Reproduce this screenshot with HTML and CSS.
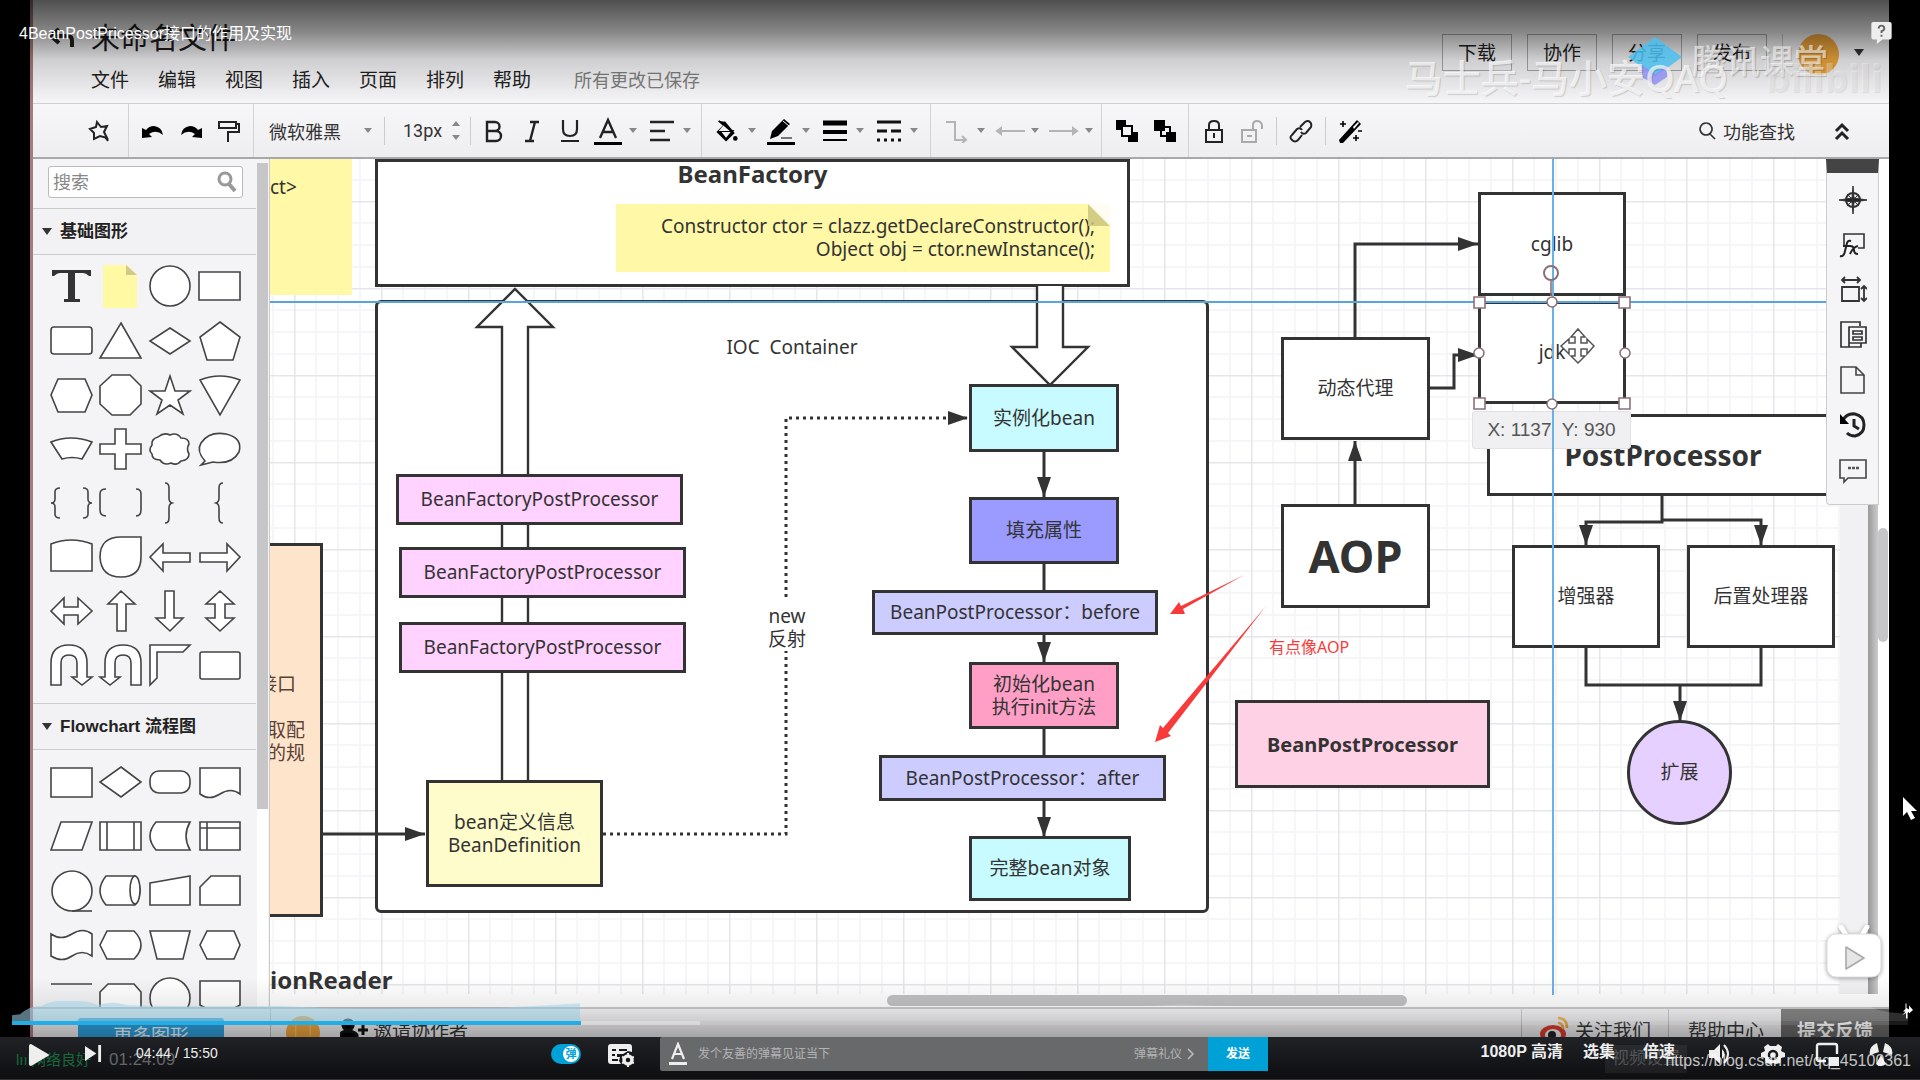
FILE: index.html
```html
<!DOCTYPE html>
<html lang="zh-CN">
<head>
<meta charset="utf-8">
<title>4BeanPostPricessor接口的作用及实现</title>
<link rel="stylesheet" href="styles.css">
</head>
<body>
<main class="player">
  <section class="video">
    <header class="top">
      <button class="back" aria-label="返回"><svg width="26" height="24" viewBox="0 0 26 24"><path d="M10 3 2 10l8 7M3 10h16q4 0 4 5v6" fill="none" stroke="#222" stroke-width="4"/></svg></button>
      <div class="heading">
        <h1>未命名文件</h1>
        <nav class="menu">
          <button>文件</button><button>编辑</button><button>视图</button><button>插入</button><button>页面</button><button>排列</button><button>帮助</button>
          <span class="saved">所有更改已保存</span>
        </nav>
      </div>
      <div class="actions">
        <button>下载</button><button>协作</button><button>分享</button><button>发布</button>
        <span class="rule"></span>
        <span class="avatar"></span>
        <i class="caret dark"></i>
      </div>
    </header>

    <div class="toolbar">
      <div class="group first"><button aria-label="形状"><svg viewBox="0 0 24 24"><path d="M9 3 13 8l6-1-3 6 3 6-7-2-6 3v-6l-4-4 6-2zM17 18l3 4" fill="none" stroke="#222" stroke-width="2"/></svg></button></div>
      <div class="group undo">
        <button aria-label="撤销"><svg viewBox="0 0 24 24"><path d="M1 9v10l10-1-3-3q7-5 14 1-1-8-9-9-5 0-8 4z"/></svg></button>
        <button aria-label="重做"><svg viewBox="0 0 24 24"><path d="M23 9v10l-10-1 3-3Q9 10 2 16q1-8 9-9 5 0 8 4z"/></svg></button>
        <button aria-label="格式刷"><svg viewBox="0 0 24 24"><path d="M2 3h17v6H2zM19 5h3v8H11v10" fill="none" stroke="#222" stroke-width="2"/></svg></button>
      </div>
      <div class="group text">
        <button class="font">微软雅黑<i class="caret"></i></button><span class="rule"></span>
        <button class="size">13px<span class="spin"><i></i><i></i></span></button><span class="rule edge"></span>
        <button aria-label="粗体"><svg viewBox="0 0 24 24"><path d="M5 3h8a4 4 0 0 1 0 9H5zm0 9h9a5 5 0 0 1 0 10H5z" fill="none" stroke="#222" stroke-width="2.4"/></svg></button>
        <button aria-label="斜体"><svg viewBox="0 0 24 24"><path d="M10 3h9M5 22h9M15 3l-5 19" fill="none" stroke="#222" stroke-width="2.4"/></svg></button>
        <button aria-label="下划线"><svg viewBox="0 0 24 24"><path d="M5 1v9q0 7 7 7t7-7V1M3 22h18" fill="none" stroke="#222" stroke-width="2.2"/></svg></button>
        <button class="wide" aria-label="文字颜色"><svg viewBox="0 0 30 28"><path d="m7 21 8-18 8 18M10 15h10" fill="none" stroke="#222" stroke-width="2.4"/><path d="M1 25h28v3H1z"/></svg></button><i class="caret"></i>
        <button class="after" aria-label="对齐"><svg viewBox="0 0 24 24"><path d="M0 3h24M0 12h15M0 21h20" stroke="#222" stroke-width="2.6"/></svg></button><i class="caret"></i>
      </div>
      <div class="group">
        <button aria-label="填充"><svg viewBox="0 0 24 26"><path d="M3 2l6 5-7 7 9 9 8-8L9 3M4 13h14l-7 9z" stroke="#000" stroke-width="2"/><path d="m8 7 7 6H3z" fill="#f4f3f5"/><circle cx="21" cy="21" r="2.5"/></svg></button><i class="caret"></i>
        <button class="wide after" aria-label="线条颜色"><svg viewBox="0 0 30 28"><path d="m4 22 2-8L18 2l6 5-12 12zM1 25h28v3H1z"/><path d="m17 4 6 5" stroke="#fff"/><path d="M15 21h11" stroke="#777" stroke-width="2"/></svg></button><i class="caret"></i>
        <button class="after" aria-label="线条宽度"><svg viewBox="0 0 24 24"><path d="M0 4h24" stroke="#000" stroke-width="5"/><path d="M0 13h24" stroke="#000" stroke-width="4"/><path d="M0 21h24" stroke="#000" stroke-width="2"/></svg></button><i class="caret"></i>
        <button class="after" aria-label="线条样式"><svg viewBox="0 0 24 24"><path d="M0 3h24" stroke="#111" stroke-width="3"/><path d="M0 12h24" stroke="#111" stroke-width="3" stroke-dasharray="10 4"/><path d="M0 21h24" stroke="#111" stroke-width="3" stroke-dasharray="3 4"/></svg></button><i class="caret"></i>
      </div>
      <div class="group faded">
        <button aria-label="连线类型"><svg viewBox="0 0 24 24"><path d="M2 3h9v18h11M18 17l4 4-4 3" fill="none" stroke="#b4b4b6" stroke-width="2"/></svg></button><i class="caret"></i>
        <button class="wide after" aria-label="起点"><svg viewBox="0 0 30 24"><path d="M2 12h28M6 9l-4 3 4 3z" fill="#b4b4b6" stroke="#b4b4b6" stroke-width="2"/></svg></button><i class="caret"></i>
        <button class="wide after" aria-label="终点"><svg viewBox="0 0 30 24"><path d="M0 12h28M24 9l4 3-4 3z" fill="#b4b4b6" stroke="#b4b4b6" stroke-width="2"/></svg></button><i class="caret"></i>
      </div>
      <div class="group layers">
        <button aria-label="置于顶层"><svg viewBox="0 0 24 24"><path d="M1 1h10v10H1zM13 13h10v10H13z"/><path d="M7 7h10v10H7z" fill="#f4f3f5" stroke="#000" stroke-width="2"/></svg></button>
        <button aria-label="置于底层"><svg viewBox="0 0 24 24"><path d="M8 8h9v9H8z" fill="none" stroke="#000" stroke-width="2"/><path d="M1 1h11v11H1zM13 13h10v10H13z"/></svg></button>
      </div>
      <div class="group last">
        <button aria-label="锁定"><svg viewBox="0 0 24 24"><path d="M4 11h16v12H4zM7 11V6q0-4 5-4t5 4v5M12 14v5" fill="none" stroke="#222" stroke-width="2"/></svg></button>
        <button aria-label="解锁"><svg viewBox="0 0 24 24"><path d="M2 11h14v12H2zM13 11V6q0-4 4-4t5 4v4M7 17h5" fill="none" stroke="#aaa" stroke-width="2"/></svg></button>
        <span class="rule gap"></span>
        <button aria-label="链接"><svg viewBox="0 0 24 24"><path d="m11 8 5-5q3-2 5 0t1 5l-5 6q-3 2-5-1M13 16l-4 5q-3 3-6 0t0-5l5-6q3-2 5 1" fill="none" stroke="#222" stroke-width="2"/></svg></button>
        <span class="rule gap"></span>
        <button aria-label="美化"><svg viewBox="0 0 24 24"><path d="M2 24 1 21 19 1l4 4L5 24z"/><path d="m15 8 5-5 1 1-5 6z" fill="#fff"/><path d="M5 2v6M2 5h6M18 16v6M15 19h6M20 12h4" stroke="#000" stroke-width="1.6"/></svg></button>
      </div>
      <button class="find"><svg width="20" height="20" viewBox="0 0 20 20"><path d="M8 2a6 6 0 1 0 .1 0M12 13l5 5" fill="none" stroke="#333" stroke-width="1.6"/></svg>功能查找</button>
      <button class="fold" aria-label="收起"><svg viewBox="0 0 24 24"><path d="m6 12 6-6 6 6M6 20l6-6 6 6" fill="none" stroke="#222" stroke-width="3"/></svg></button>
    </div>

    <div class="work">
      <aside class="shapes">
        <label class="search"><input type="text" placeholder="搜索" aria-label="搜索"><svg width="22" height="24" viewBox="0 0 22 24"><circle cx="9" cy="9" r="6" fill="none" stroke="#999" stroke-width="3"/><path d="m13 14 6 7" stroke="#999" stroke-width="4"/></svg></label>
        <h2><i class="caret dark"></i>基础图形</h2>
        <svg class="palette basic" viewBox="0 0 196 440">
          <g class="ink">
            <path d="M2 17h39v6h-2q-3-3-6-3h-8v26h5v3H14v-3h4V20h-8q-3 0-6 3H2z" fill="#333" stroke="none"/>
            <path d="M53 12h24l10 10v33H53z" fill="#fff9a3" stroke="none"/><path d="M76 12v10h11z" fill="#cfc98a" stroke="none"/>
            <circle cx="120" cy="33" r="20"/><path d="M149 19h41v28h-41z"/>
            <rect x="1" y="74" width="41" height="27" rx="3"/><path d="m71 70 20 35H50zM120 75l20 13-20 13-20-13zM170 69l20 15-7 23h-26l-7-23z"/>
            <path d="M8 126h27l7 16-7 17H8l-7-17zM62 122h18l11 11v18l-11 11H62l-12-11v-18zM120 123l5 15h15l-12 9 5 14-13-9-13 9 5-14-12-9h15zM150 127q20-8 40 0l-20 35z"/>
            <path d="M1 189q20-8 41 0l-10 17q-10-3-20 0zM65 176h11v15h15v10H76v15H65v-15H50v-10h15z"/>
            <path d="M108 184q6-5 12-2 7-3 11 3 8 0 8 6-3 5 0 10 0 6-8 7-4 5-10 2-7 3-11-3-8 0-8-6-4-4 0-9-1-6 6-8z"/>
            <path d="M155 208q-9-10-4-18 8-12 25-9 17 4 13 18-7 13-26 10l-12 3z"/>
            <path class="open" d="M10 235q-5 0-5 4v7q0 4-4 4 4 0 4 4v7q0 4 5 4M33 235q5 0 5 4v7q0 4 4 4-4 0-4 4v7q0 4-5 4M56 236q-6 0-6 5v16q0 6 6 6M86 236q5 0 5 5v16q0 6-5 6M115 230q4 0 4 5v10q0 4 3 5-3 1-3 5v10q0 5-4 5M173 230q-4 0-4 5v10q0 4-3 5 3 1 3 5v10q0 5 4 5"/>
            <path d="M1 291q20-8 41 0v27H1zM71 284h20v20q0 20-20 20t-21-20q0-20 21-20z"/>
            <path d="m100 304 13-13v9h27v9h-27v9zM190 304l-13-13v9h-27v9h27v9z"/>
            <path d="m1 358 13-13v9h14v-9l14 13-14 13v-9H14v9zM71 338l14 13h-9v27h-9v-27h-9zM120 378l-14-13h9v-27h9v27h9zM170 338l14 13h-9v14h9l-14 13-14-13h9v-14h-9z"/>
            <path d="M1 432v-22q0-18 18-18t18 18v14h5l-10 8-10-8h5v-14q0-8-8-8t-8 8v22zM91 432v-22q0-18-18-18t-18 18v14h-5l10 8 10-8h-5v-14q0-8 8-8t8 8v22z"/>
            <path d="M100 392h40l-7 7h-26v26l-7 7z"/><rect x="150" y="399" width="40" height="27" rx="2"/>
          </g>
        </svg>
        <h2><i class="caret dark"></i>Flowchart 流程图</h2>
        <svg class="palette flow" viewBox="0 0 196 257">
          <g class="ink">
            <path d="M1 18h41v29H1zM71 17l20 15-20 15-21-15z"/><rect x="100" y="21" width="40" height="22" rx="9"/><path d="M150 18h40v26q-9-7-20 0t-20 0z"/>
            <path d="M11 72h31l-10 28H1zM50 72h41v28H50z"/><path class="open" d="M57 72v28M84 72v28"/><path d="M106 72h34q-8 14 0 28h-34q-12-14 0-28zM150 72h40v28h-40z"/><path class="open" d="M157 72v28M150 78h40"/>
            <circle cx="22" cy="141" r="20"/><path class="open" d="M22 161h20"/><path d="M56 126h29q10 14 0 29H56q-12-14 0-29z"/><ellipse cx="85" cy="140" rx="5" ry="14"/><path d="m100 133 40-7v29h-40zM161 126h29v29h-40v-18z"/>
            <path d="M1 184q10 7 21 0t20 0v22q-10-7-20 0t-21 0zM57 181h27q14 14 0 28H57l-7-14zM100 181h40l-7 28h-26zM157 181h27l6 14-6 14h-27l-7-14z"/>
            <path class="open" d="M1 234h41"/><path d="M50 262v-20l8-8h26l7 8v20z"/><circle cx="120" cy="248" r="20"/><path d="M150 231h40v24q-20 12-40 0z"/>
          </g>
        </svg>
      </aside>

      <div class="canvas">
        <svg class="grid" width="100%" height="100%"><defs><pattern id="g" x="24" y="42" width="87" height="87" patternUnits="userSpaceOnUse"><path d="M22 0v87M44 0v87M66 0v87M0 22h87M0 44h87M0 66h87" stroke="#f6f5f8" stroke-width="2" fill="none"/><path d="M0 0v87M0 0h87" stroke="#e6e5e9" stroke-width="3" fill="none"/></pattern></defs><rect width="100%" height="100%" fill="url(#g)"/></svg>
        <div class="gutter"></div>
        <div class="hbar"></div><div class="vbar"></div>

        <div class="sticky left-note">ct&gt;</div>
        <div class="node factory"><b>BeanFactory</b></div>
        <div class="sticky code">Constructor ctor = clazz.getDeclareConstructor();<br>Object obj = ctor.newInstance();</div>
        <div class="node ioc"></div>
        <div class="node reader-box"><p>接口</p><p>取配<br>的规</p></div>
        <b class="reader">ionReader</b>
        <div class="node cglib">cglib</div>
        <div class="node jdk">jdk</div>
        <div class="node post"><b>PostProcessor</b></div>

        <svg class="links" viewBox="270 159 1619 848">
          <defs><marker id="a" viewBox="0 0 20 14" refX="20" refY="7" markerWidth="20" markerHeight="14" markerUnits="userSpaceOnUse" orient="auto"><path d="M0 0 20 7 0 14z" fill="#333"/></marker></defs>
          <g fill="#fff" stroke="#333" stroke-width="2.4">
            <path d="M502 782V327h-25l38-38 38 38h-25v455z"/>
            <path d="M1037 286v61h-25l38 38 38-38h-25v-61"/>
          </g>
          <g fill="none" stroke="#333" stroke-width="3">
            <path d="M322 834h103" marker-end="url(#a)"/>
            <path d="M603 834h183V418h182" stroke-dasharray="3 4" marker-end="url(#a)"/>
            <path d="M1044 451v46" marker-end="url(#a)"/><path d="M1044 564v98" marker-end="url(#a)"/><path d="M1044 729v108" marker-end="url(#a)"/>
            <path d="M1355 504v-63" marker-end="url(#a)"/><path d="M1355 337v-93h123" marker-end="url(#a)"/><path d="M1429 388h25v-33h24" marker-end="url(#a)"/>
            <path d="M1662 496v26h-76v23" marker-end="url(#a)"/><path d="M1662 520h99v25" marker-end="url(#a)"/><path d="M1586 648v37h175v-37"/><path d="M1680 685v36" marker-end="url(#a)"/>
          </g>
        </svg>

        <div class="label ioc-title">IOC&nbsp; Container</div>
        <div class="label reflect">new<br>反射</div>
        <div class="node pink bf1">BeanFactoryPostProcessor</div>
        <div class="node pink bf2">BeanFactoryPostProcessor</div>
        <div class="node pink bf3">BeanFactoryPostProcessor</div>
        <div class="node cream definition">bean定义信息<br>BeanDefinition</div>
        <div class="node cyan create">实例化bean</div>
        <div class="node violet fill">填充属性</div>
        <div class="node lilac before">BeanPostProcessor：before</div>
        <div class="node rose init">初始化bean<br>执行init方法</div>
        <div class="node lilac after-init">BeanPostProcessor：after</div>
        <div class="node cyan done">完整bean对象</div>
        <div class="node proxy">动态代理</div>
        <div class="node aop"><b>AOP</b></div>
        <div class="node adviser">增强器</div>
        <div class="node handler">后置处理器</div>
        <div class="node extend">扩展</div>
        <div class="node bpp"><b>BeanPostProcessor</b></div>
        <div class="position">X: 1137&nbsp; Y: 930</div>

        <svg class="links" viewBox="270 159 1619 848">
          <path d="M1553 159v836" stroke="#6cb0e8" stroke-width="2"/><path d="M270 302h1557" stroke="#5aa5d8" stroke-width="2"/>
          <g fill="#fff" stroke="#8d7077" stroke-width="1.6">
            <circle cx="1551" cy="273" r="7" fill="none" stroke-width="2"/><path d="M1551 281v15"/>
            <path d="M1474 297h11v11h-11zM1619 297h11v11h-11zM1474 398h11v11h-11zM1619 398h11v11h-11z"/>
            <circle cx="1552" cy="302" r="5"/><circle cx="1552" cy="404" r="5"/><circle cx="1479" cy="353" r="5"/><circle cx="1625" cy="353" r="5"/>
          </g>
          <path d="m1578 329 7 8h-4v6h6v-4l7 7-7 8v-5h-6v7h4l-7 7-7-7h4v-7h-6v5l-8-8 8-7v4h6v-6h-4z" fill="#fff" stroke="#555" stroke-width="1.5"/>
          <path d="m1244 575-61 34 2 5-15 0 9-12 2 4zM1266 606l-98 127 3 3-16 6 5-17 3 3z" fill="#f93a3a"/>
        </svg>
        <span class="remark">有点像AOP</span>

        <div class="dock">
          <button aria-label="导航"><svg viewBox="0 0 28 28"><circle cx="14" cy="14" r="7" fill="none" stroke="#333" stroke-width="2"/><path d="m14 0 1 12 13 2-13 2-1 12-1-12-13-2 13-2zM8 8l12 12M20 8 8 20" fill="#222" stroke="#333"/></svg></button>
          <button aria-label="公式"><svg viewBox="0 0 28 28"><path d="M5 14V3h20v14h-6" fill="none" stroke="#333" stroke-width="1.6"/><path d="M1 25q4 1 5-5l2-8q1-3 4-2M4 15h8M11 15q4 0 4 4t4 4M19 15q-5 1-8 8" fill="none" stroke="#222" stroke-width="2"/></svg></button>
          <button aria-label="尺寸"><svg viewBox="0 0 28 28"><path d="M3 11h17v14H3zM3 4h18M6 1 3 4l3 3M18 1l3 3-3 3M25 10v15M22 13l3-3 3 3M22 22l3 3 3-3" fill="none" stroke="#333" stroke-width="1.8"/></svg></button>
          <button aria-label="图层"><svg viewBox="0 0 28 28"><path d="M10 26H2V1h19v4M10 6h17v16H10zM14 10h9v3h-9zM14 16h9v3h-9zM10 22v4h12v-4" fill="none" stroke="#333" stroke-width="1.7"/></svg></button>
          <button aria-label="页面"><svg viewBox="0 0 28 28"><path d="M2 1h15l8 8v18H2zM17 1v8h8" fill="none" stroke="#444" stroke-width="1.6"/></svg></button>
          <button aria-label="历史"><svg viewBox="0 0 28 28"><path d="M4 9q4-7 12-6 9 2 9 11t-9 11q-5 0-8-3M15 8v7l5 3" fill="none" stroke="#222" stroke-width="3"/><path d="M1 3v10h9z"/></svg></button>
          <button aria-label="评论"><svg viewBox="0 0 28 28"><path d="M1 4h26v18H9l-4 4v-4H1z" fill="none" stroke="#444" stroke-width="1.6"/><path d="M9 12h3M13 12h3M17 12h3" stroke="#555" stroke-width="2.5"/></svg></button>
        </div>
      </div>
    </div>

    <footer class="status">
      <div class="more"><button>更多图形</button></div>
      <span class="face">□</span>
      <button class="invite"><svg width="28" height="30" viewBox="0 0 28 30"><path d="M8 4a5 5 0 1 0 .1 0M0 23v-4q2-4 8-4t9 4v4zM18 14h10M23 9v10" stroke="#111" stroke-width="3"/></svg>邀请协作者</button>
      <a class="tab follow" href="#"><svg width="30" height="30" viewBox="0 0 30 30"><ellipse cx="13" cy="19" rx="13" ry="9" fill="#d9392f"/><ellipse cx="13" cy="20" rx="8" ry="6" fill="#eee"/><circle cx="12" cy="20" r="4" fill="#222"/><path d="M18 3q9 0 9 10M18 8q5 0 5 6" fill="none" stroke="#e8a33a" stroke-width="2.5"/></svg>关注我们</a>
      <a class="tab guide" href="#">帮助中心</a>
      <a class="tab feedback" href="#">提交反馈</a>
    </footer>
  </section>

  <div class="shade-top"></div><div class="shade-bottom"></div>
  <p class="video-title">4BeanPostPricessor接口的作用及实现</p>
  <svg class="help" viewBox="0 0 22 26"><path d="M2 1h18q2 0 2 2v15q0 2-2 2h-8l-6 5v-5H2q-2 0-2-2V3q0-2 2-2z" fill="#eee"/><path d="M8 8q0-3 3-3t3 3q0 2-3 3v2M11 15v2" fill="none" stroke="#666" stroke-width="2"/></svg>
  <div class="mark-course"><svg viewBox="0 0 54 48"><path d="m27 0 27 20-27 20L0 20z" fill="#4cc0ef" opacity=".85"/><path d="M14 28v12l13 8 12-8V28l-12 9z" fill="#8f8ff2" opacity=".85"/></svg><span>腾讯课堂</span></div>
  <div class="mark-author">马士兵-马小安QAQ</div>
  <div class="mark-site">bilibili</div>
  <svg class="mark-tv" viewBox="0 0 56 54"><path d="m15 2 5 8M41 2l-5 8" stroke="#fff" stroke-width="5" stroke-linecap="round"/><rect x="1" y="9" width="54" height="43" rx="9" fill="#fff" stroke="#ddd"/><path d="m20 22 18 11-18 11z" fill="#e6e6e6" stroke="#aaa" stroke-width="1.6" stroke-linejoin="round"/></svg>
  <svg class="pointer" viewBox="0 0 14 24"><path d="M0 0v19l4-4 4 8 4-2-4-7h6z" fill="#fff"/></svg>

  <div class="seek">
    <svg class="wave" viewBox="0 0 1896 24" preserveAspectRatio="none"><path d="M0 24v-7l8-1q10-11 22-10 10-8 28-6 16-1 28 5 14-6 30 0 60 2 150 1 60 4 120 3 50-1 100-1 40-2 82-5v21z" fill="#9ed3ea" opacity=".55"/><path d="M568 24V7h560l40-3 50 3h640q14 8 38 8v9z" fill="#fff" opacity=".18"/></svg>
    <input type="range" min="0" max="950" value="284" aria-label="播放进度">
    <svg class="spark" viewBox="0 0 24 30"><path d="m1 23 6-7H2l5-5V0h2v9l9 5-7 5v11H8V19zM14 4l8 9-8 7z" fill="#fff"/></svg>
  </div>

  <div class="controls">
    <div class="ghost-left"><span class="net">lııl网络良好</span><span>01:24:09</span></div>
    <div class="ghost-right">视频设置</div>
    <button class="play" aria-label="播放"><svg viewBox="0 0 20 24"><path d="M2 1q-2 0-2 2v18q0 2 2 2l17-10q2-1 0-2z"/></svg></button>
    <button class="next" aria-label="下一个"><svg viewBox="0 0 18 18"><path d="M0 1v16l12-8zM14 0h3v18h-3z"/></svg></button>
    <span class="time">04:44 / 15:50</span>
    <label class="danmu"><input type="checkbox" checked><span>弹</span></label>
    <button class="prefs" aria-label="弹幕设置"><svg viewBox="0 0 26 24"><path d="M3 1h18q3 0 3 3v5l-4-1-5 3H9v3h3l-1 4 2 3H3q-3 0-3-3V4q0-3 3-3z"/><path d="M4 7h4M11 7h8M4 12h3M4 17h6" stroke="#17181c" stroke-width="2"/><circle cx="20" cy="17" r="4" fill="none" stroke="#eee" stroke-width="3.5"/><path d="M20 10v3M20 21v3M14 14l3 1M23 19l3 1M26 14l-3 1M17 19l-3 1" stroke="#eee" stroke-width="2"/></svg></button>
    <div class="sender">
      <svg viewBox="0 0 20 24"><path d="m4 17 6-15 6 15M6 12h8" fill="none" stroke="#eee" stroke-width="2.2"/><path d="M1 20h18v3H1z" fill="#eee"/></svg>
      <input type="text" placeholder="发个友善的弹幕见证当下" aria-label="弹幕">
      <a href="#">弹幕礼仪 <svg viewBox="0 0 8 12"><path d="m1 1 5 5-5 5" fill="none" stroke="#bbb" stroke-width="1.6"/></svg></a>
      <button>发送</button>
    </div>
    <div class="right">
      <button>1080P 高清</button><button>选集</button><button class="speed">倍速</button>
      <button class="ico" aria-label="音量"><svg viewBox="0 0 24 24"><path d="M2 8h5l6-6v20l-6-6H2zM15 7q5 5 0 10z"/><path d="M17 3q8 9 0 18" fill="none" stroke="#eee" stroke-width="2"/></svg></button>
      <button class="ico" aria-label="设置"><svg viewBox="0 0 24 24"><path d="M7 2l2 2h6l2-2 4 3-1 4 4 2v4l-4 1-1 5-4 1-3-1-3 1-4-1-1-5-4-1v-4l4-2-1-4z"/><circle cx="12" cy="13" r="4" fill="#eee" stroke="#17181c" stroke-width="2.5"/></svg></button>
      <button class="ico" aria-label="小窗"><svg viewBox="0 0 24 24"><path d="M11 19H4q-2 0-2-2V4q0-2 2-2h16q2 0 2 2v8" fill="none" stroke="#eee" stroke-width="2.4"/><path d="M14 15h10v9H14z"/></svg></button>
      <button class="ico" aria-label="全屏"><svg viewBox="0 0 24 24"><path d="M8 1 10 10 1 13q-2-8 7-12zM16 1l-2 9 9 3q2-8-7-12zM12 13l5 9q-5 4-10 0z"/></svg></button>
    </div>
    <div class="source">https://blog.csdn.net/qq_45100361</div>
  </div>
</main>
</body>
</html>
```
FILE: styles.css
```css
* { box-sizing: border-box; }
body { margin: 0; background: #000; font-family: "Noto Sans", "Noto Sans CJK SC", sans-serif; color: #333; }
button, input { font: inherit; color: inherit; border: 0; background: none; padding: 0; }
svg { display: block; }
h1, h2, p { margin: 0; }
a { color: inherit; text-decoration: none; }

.player { position: relative; min-height: 100vh; display: flex; flex-direction: column; overflow: hidden; }
.video { flex: 1; margin: 0 31px 0 30px; border-left: 3px solid #a8797e; background: #f4f3f5; display: flex; flex-direction: column; min-width: 0; }

.top { display: flex; height: 104px; border-bottom: 1px solid #d0cfd2; background: #f7f6f8; }
.back { width: 58px; height: 76px; display: flex; align-items: center; justify-content: center; }
.heading h1 { font-size: 29px; line-height: 40px; font-weight: 400; margin-top: 18px; color: #1d1d1d; }
.menu { display: flex; gap: 29px; font-size: 19px; line-height: 28px; margin-top: 8px; color: #222; }
.saved { font-size: 18px; margin-left: 14px; color: #808080; }
.actions { margin-left: auto; padding: 34px 25px 0 0; display: flex; align-items: flex-start; gap: 15px; }
.actions button { width: 70px; height: 37px; border: 1px solid #aaa; font-size: 19px; line-height: 34px; color: #222; }
.actions .rule { height: 37px; }
.avatar { width: 41px; height: 41px; border-radius: 50%; background: #f2a93f; }
.actions .caret { margin-top: 15px; }

.caret { display: block; flex: none; width: 0; border: 4px solid transparent; border-top: 5px solid #888; border-bottom: 0; }
.caret.dark { border: 5px solid transparent; border-top: 7px solid #333; border-bottom: 0; }
.rule { width: 1px; height: 28px; background: #ccc; flex: none; }

.toolbar { display: flex; align-items: stretch; height: 55px; border-bottom: 2px solid #a8a7aa; background: linear-gradient(#f7f6f8, #eeedef); }
.group { display: flex; align-items: center; padding: 0 10px 0 6px; border-right: 1px solid #d2d1d4; }
.group button { width: 38px; display: flex; justify-content: center; }
.group svg { width: 24px; height: 24px; }
.group .wide svg { width: 30px; height: 28px; }
.group .after { margin-left: 4px; }
.group > .caret { margin: 0 2px; }
.group.first { width: 96px; padding-left: 48px; }
.group.undo { padding: 0 5px; width: 125px; }
.group.text { padding: 0 8px 0 0; }
.group .font { width: 130px; padding: 0 12px 0 15px; justify-content: space-between; align-items: center; font-size: 18px; }
.group .size { width: 85px; padding: 0 10px 0 18px; justify-content: space-between; align-items: center; font: 18px Roboto, sans-serif; }
.rule.edge { margin-right: 4px; }
.spin { display: grid; gap: 9px; }
.spin i { border: 4px solid transparent; border-top: 5px solid #888; border-bottom: 0; }
.spin i:first-child { transform: rotate(180deg); }
.group.faded { padding-right: 6px; }
.group.layers { padding-right: 4px; }
.group.last { border: 0; }
.rule.gap { margin: 0 5px; }
.find { margin-left: auto; display: flex; align-items: center; gap: 5px; font-size: 18px; }
.fold { width: 94px; display: flex; align-items: center; justify-content: center; }
.fold svg { width: 24px; height: 24px; }

.work { flex: 1; display: flex; min-height: 0; }
.shapes { flex: none; width: 237px; height: 848px; padding-right: 13px; border-right: 1px solid #ccc; background: linear-gradient(to bottom, #c6c5c8 646px, #fff 646px) right 1px top 4px / 11px 100% no-repeat #f4f3f6; overflow: hidden; }
.search { display: flex; align-items: center; margin: 7px 0 10px 15px; width: 195px; height: 32px; border: 1px solid #bbb; border-radius: 3px; background: #fff; padding: 0 4px; }
.search input { width: 163px; font-size: 18px; outline: 0; }
.search input::placeholder { color: #888; opacity: 1; }
.shapes h2 { display: flex; align-items: center; gap: 8px; height: 47px; padding-left: 9px; font: 700 17px/24px "Liberation Sans", "Noto Sans CJK SC", sans-serif; color: #222; border: 1px solid #ccc; border-width: 1px 0; background: #f2f1f3; }
.palette { width: 196px; margin-left: 17px; }
.basic { height: 440px; margin-bottom: 10px; margin-top: -2px; }
.flow { height: 257px; }
.ink { fill: #fff; stroke: #444; stroke-width: 1.6; }
.ink .open { fill: none; }

.canvas { position: relative; flex: 1; min-width: 0; overflow: hidden; background: #fff; font-size: 19px; line-height: 23px; }
.grid, .gutter, .hbar, .vbar, .sticky, .node, .links, .label, .position, .remark, .reader, .dock { position: absolute; }
.grid { left: 0; top: 0; width: calc(100% - 49px); height: calc(100% - 13px); }
.gutter { right: 11px; top: 0; bottom: 13px; width: 38px; background: linear-gradient(to right, #f1f0f2 28px, #999 28px, #ccc); }
.hbar { left: 617px; bottom: 1px; width: 520px; height: 11px; border-radius: 6px; background: #c2c1c4; }
.vbar { right: 1px; top: 369px; width: 10px; height: 114px; border-radius: 5px; background: #c6c5c8; }
.links { left: 0; top: 0; width: 1619px; height: 848px; }
.sticky { background: #fff8a6; }
.left-note { left: 0; top: 0; width: 82px; height: 136px; padding-top: 17px; }
.code { left: 346px; top: 45px; width: 494px; height: 68px; padding: 11px 15px; text-align: right; white-space: nowrap; }
.code::before { content: ""; position: absolute; z-index: -1; }
.code::after { content: ""; position: absolute; right: 0; top: 0; border: 11px solid #fff; border-left-color: #cdc77f; border-bottom-color: #cdc77f; opacity: .85; }
.node { display: flex; align-items: center; justify-content: center; text-align: center; border: 3px solid #333; background: #fff; white-space: nowrap; }
.factory { left: 105px; top: 0; width: 755px; height: 128px; align-items: flex-start; font-size: 24px; line-height: 24px; }
.ioc { left: 105px; top: 141px; width: 834px; height: 613px; border-radius: 6px; }
.reader-box { left: -100px; top: 384px; width: 153px; height: 374px; background: #ffe4cc; color: #5b4136; flex-direction: column; justify-content: flex-start; align-items: flex-end; padding: 127px 15px 0 0; gap: 23px; }
.reader-box p:first-child { margin-right: 9px; }
.reader { left: 0; top: 806px; font-size: 24px; line-height: 30px; }
.pink { background: #ffd2ff; width: 287px; height: 51px; }
.bf1 { left: 126px; top: 315px; }
.bf2 { left: 129px; top: 388px; }
.bf3 { left: 129px; top: 463px; }
.cream { background: #fffccb; }
.definition { left: 156px; top: 621px; width: 177px; height: 107px; }
.cyan { background: #c8fbff; }
.violet { background: #9a9aff; }
.lilac { background: #ccccff; }
.rose { background: #ff9fc6; }
.create { left: 699px; top: 225px; width: 150px; height: 68px; }
.fill { left: 699px; top: 338px; width: 150px; height: 67px; }
.before { left: 602px; top: 431px; width: 286px; height: 45px; }
.init { left: 699px; top: 503px; width: 150px; height: 67px; }
.after-init { left: 609px; top: 596px; width: 287px; height: 46px; }
.done { left: 699px; top: 677px; width: 162px; height: 65px; }
.cglib { left: 1208px; top: 33px; width: 148px; height: 104px; }
.jdk { left: 1208px; top: 142px; width: 148px; height: 103px; }
.proxy { left: 1011px; top: 178px; width: 149px; height: 103px; }
.aop { left: 1011px; top: 345px; width: 149px; height: 104px; font-size: 45px; line-height: 50px; }
.post { left: 1217px; top: 255px; width: 352px; height: 82px; font-size: 28px; }
.adviser { left: 1242px; top: 386px; width: 148px; height: 103px; }
.handler { left: 1417px; top: 386px; width: 148px; height: 103px; }
.extend { left: 1357px; top: 561px; width: 105px; height: 105px; border-radius: 50%; background: #e5d0ff; }
.bpp { left: 965px; top: 541px; width: 255px; height: 88px; background: #ffd1e4; font-size: 20px; }
.label { text-align: center; background: #fff; white-space: nowrap; }
.ioc-title { left: 442px; top: 177px; width: 160px; }
.reflect { left: 487px; top: 442px; width: 60px; height: 50px; padding-top: 4px; }
.position { left: 1202px; top: 252px; width: 159px; height: 38px; border: 1px solid #e2e1e4; border-radius: 3px; background: #f0eff1; font: 19px/36px "Liberation Sans", sans-serif; text-align: center; color: #555; }
.remark { left: 999px; top: 477px; font-size: 16px; color: #f93a3a; }
.dock { right: 10px; top: 0; width: 53px; height: 346px; border: 1px solid #ccc; border-top: 14px solid #444; background: #f5f4f6; padding-top: 13px; display: grid; gap: 17px; align-content: start; justify-content: center; border-radius: 0 0 0 4px; }
.dock button, .dock svg { width: 28px; height: 28px; }

.status { flex: none; display: flex; align-items: flex-start; height: 30px; overflow: hidden; border-top: 2px solid #bbb; background: #ececee; font-size: 19px; line-height: 44px; }
.more { flex: none; width: 238px; border-right: 1px solid #bbb; padding: 5px 46px 0 45px; }
.more button { width: 100%; height: 36px; line-height: 34px; background: #2c9fdb; color: #e8f4fb; border-radius: 3px; }
.face { width: 34px; height: 34px; margin: 7px 20px 0 15px; border-radius: 50%; background: #eda33c; color: #f6cf90; line-height: 30px; text-align: center; }
.invite { display: flex; align-items: center; gap: 5px; line-height: 44px; }
.tab { display: flex; align-items: center; gap: 5px; padding: 0 17px; border-left: 1px solid #bbb; height: 44px; }
.follow { margin-left: auto; padding: 0 17px 0 18px; }
.tab svg { margin-top: -2px; }
.tab.guide { padding: 0 17px 0 19px; }
.feedback { background: #666; color: #fff; border: 0; font-weight: 700; padding: 0 16px; }

.shade-top, .shade-bottom, .video-title, .help, .mark-course, .mark-author, .mark-site, .mark-tv, .pointer, .seek { position: absolute; }
.shade-top { left: 0; right: 0; top: 0; height: 104px; background: linear-gradient(rgba(0,0,0,.68), rgba(0,0,0,.45) 32px, rgba(0,0,0,.16) 60px, transparent); }
.shade-bottom { left: 0; right: 0; bottom: 43px; height: 60px; background: linear-gradient(transparent, rgba(0,0,0,.08) 32px, rgba(0,0,0,.3)); }
.video-title { left: 19px; top: 23px; font: 16px/22px "Liberation Sans", "Noto Sans CJK SC", sans-serif; color: #fff; }
.help { right: 28px; top: 21px; width: 21px; height: 24px; }
.mark-course { right: 92px; top: 36px; display: flex; align-items: center; gap: 10px; font-size: 34px; font-weight: 500; line-height: 50px; color: rgba(255,255,255,.6); text-shadow: 1px 1px 1px rgba(0,0,0,.2); }
.mark-course svg { width: 54px; height: 50px; }
.mark-author, .mark-site { top: 52px; font-size: 38px; font-weight: 500; line-height: 50px; color: rgba(255,255,255,.7); text-shadow: 1px 1px 1px rgba(0,0,0,.15); white-space: nowrap; }
.mark-author { right: 192px; }
.mark-site { right: 38px; font-weight: 700; color: rgba(255,255,255,.3); text-shadow: 1px 1px 1px rgba(0,0,0,.08); }
.mark-tv { right: 38px; bottom: 101px; width: 56px; height: 54px; filter: drop-shadow(0 1px 2px rgba(0,0,0,.35)); }
.pointer { right: 3px; top: 797px; width: 14px; height: 24px; }

.seek { left: 12px; right: 12px; bottom: 55px; }
.wave { width: 100%; height: 20px; }
.seek input { display: block; appearance: none; width: 100%; height: 4px; margin: 0; background: linear-gradient(to right, #23ade5 30%, rgba(255,255,255,.4) 30% 36.3%, rgba(255,255,255,.1) 36.3%); }
.seek input::-webkit-slider-thumb { appearance: none; width: 1px; height: 4px; }
.spark { position: absolute; right: -6px; bottom: 6px; width: 12px; height: 16px; }

.controls { position: relative; flex: none; display: flex; align-items: flex-start; height: 43px; border-bottom: 1px solid #333; background: linear-gradient(#212226, #0d0e10); color: #eee; padding: 0 27px 0 29px; font: 14px/32px "Liberation Sans", "Noto Sans CJK SC", sans-serif; }
.controls > * { position: relative; }
.controls svg { fill: #eee; }
.play { margin-top: 6px; }
.play svg { width: 20px; height: 24px; }
.next { margin: 8px 0 0 36px; }
.next svg { width: 17px; height: 17px; }
.time { margin-left: 34px; width: 415px; white-space: pre; }
.danmu { margin-top: 7px; }
.danmu input { appearance: none; display: block; width: 30px; height: 20px; margin: 0; border-radius: 10px; background: #00a1d6; }
.danmu span { position: absolute; right: 2px; top: 2px; width: 16px; height: 16px; border-radius: 50%; background: #fff; color: #00a1d6; font-size: 11px; font-weight: 700; line-height: 16px; text-align: center; }
.prefs { margin: 6px 26px 0 27px; }
.prefs svg { width: 26px; height: 24px; }
.sender { display: flex; align-items: center; width: 608px; height: 34px; background: #68696b; color: #b4b4b5; font-size: 12px; border-radius: 2px; }
.sender > svg { width: 20px; height: 24px; margin: 0 10px 0 8px; }
.sender input { flex: 1; min-width: 0; height: 34px; outline: 0; }
.sender input::placeholder { color: #b4b4b5; opacity: 1; }
.sender a { display: flex; align-items: center; gap: 5px; margin-right: 13px; }
.sender a svg { width: 8px; height: 12px; }
.sender button { width: 60px; height: 34px; background: #00a1d6; color: #fff; font-size: 12px; font-weight: 700; }
.right { margin-left: auto; display: flex; gap: 20px; font-size: 16px; font-weight: 700; line-height: 30px; }
.right .speed { margin-left: 8px; }
.right .ico { width: 24px; margin: 3px 0 0 12px; }
.right .ico + .ico { margin-left: 10px; }
.right .ico svg { width: 24px; height: 24px; }
.controls > .ghost-left, .controls > .ghost-right, .controls > .source { position: absolute; white-space: nowrap; }
.ghost-left { left: 16px; top: 7px; display: flex; gap: 18px; font-size: 17px; color: rgba(255,255,255,.35); }
.net { font-size: 15px; color: #146a3b; }
.ghost-right { right: 233px; top: 8px; padding: 0 7px; font-size: 17px; line-height: 28px; background: rgba(255,255,255,.06); color: rgba(255,255,255,.22); }
.source { right: 9px; top: 8px; font-size: 16px; color: rgba(255,255,255,.75); }
```
